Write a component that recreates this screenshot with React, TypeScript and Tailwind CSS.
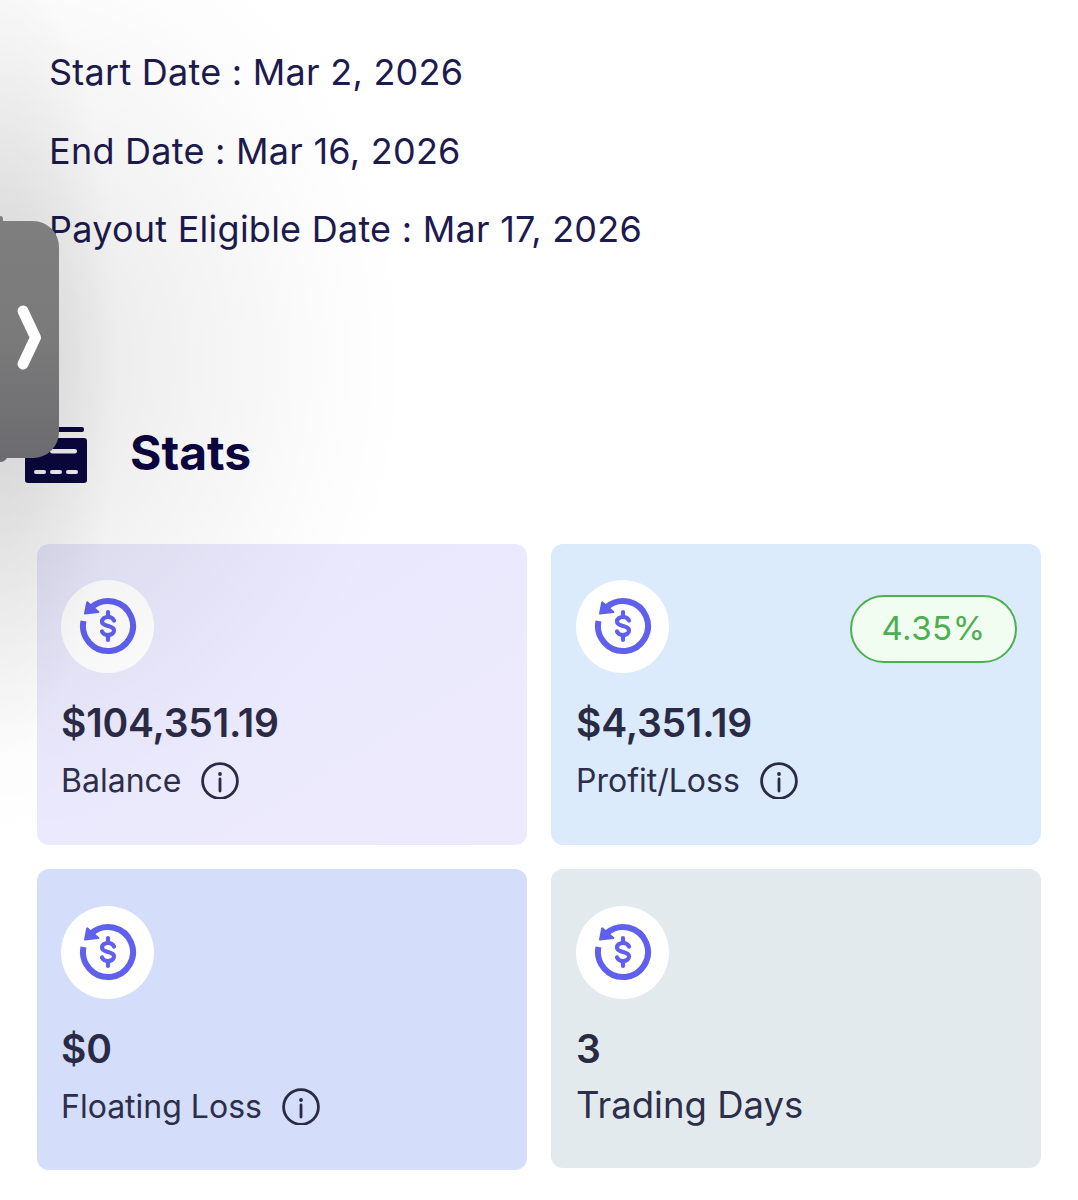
function DollarIcon() {
  return (
    <svg width="60" height="60" viewBox="0 0 60 60" fill="none">
      <path d="M14 10.8A25 25 0 1 1 5.5 25" stroke="#6060ee" strokeWidth="6" />
      <path d="M9.2 6.3 7 17.6 20.4 16Z" fill="#6060ee" stroke="#6060ee" strokeWidth="2" strokeLinejoin="round" />
      <g transform="translate(30 30)" stroke="#6060ee" strokeWidth="4.2" strokeLinecap="round">
        <path d="M6 -5.5C5 -8 2.5 -9 0 -9C-3.5 -9 -6 -7.2 -6 -4.5C-6 -1.5 -3 -0.8 0 0C3 0.8 6 1.5 6 4.5C6 7.2 3.5 9 0 9C-2.5 9 -5 8 -6 5.5" />
        <path d="M0 -14V-10M0 10V14" />
      </g>
    </svg>
  );
}

function Info() {
  return (
    <svg width="38" height="37" viewBox="0 0 38 37" fill="none" className="shrink-0">
      <circle cx="19" cy="19" r="17.4" stroke="#2a2a45" strokeWidth="2.8" />
      <circle cx="19" cy="12" r="1.9" fill="#2a2a45" />
      <path d="M19 17V29" stroke="#2a2a45" strokeWidth="2.8" strokeLinecap="round" />
    </svg>
  );
}

function Card({ bg, value, label, info, badge }: { bg: string; value: string; label: string; info?: boolean; badge?: string }) {
  return (
    <div className={`rounded-[12px] pr-[24px] ${bg}`}>
      <div className="flex items-start justify-between">
        <div className="flex h-[93px] w-[93px] items-center justify-center rounded-full bg-white">
          <DollarIcon />
        </div>
        {badge && (
          <div className="mt-[15px] flex h-[68px] w-[167px] items-center justify-center rounded-full border-[2.5px] border-[#4caf50] bg-[#f1fdf1] text-[33px] tracking-[0.5px] text-[#4caf50]">
            {badge}
          </div>
        )}
      </div>
      <div className="mt-[24px] text-[39px] leading-[52px] font-semibold tracking-[-0.2px] text-[#2a2a45]">{value}</div>
      {info ? (
        <div className="mt-[10px] flex items-center gap-[20px] text-[32px] leading-[44px] text-[#2c2e4a]">
          <span>{label}</span>
          <Info />
        </div>
      ) : (
        <div className="mt-[9px] text-[36.5px] leading-[42px] text-[#2c2e4a]">{label}</div>
      )}
    </div>
  );
}

export default function App() {
  return (
    <div className="relative h-[1200px] w-[1078px] overflow-hidden bg-white font-['Inter',sans-serif]">
      <div className="flex flex-col gap-[30px] pl-[49px] pt-[48px] text-[36px] leading-[48.5px] tracking-[0.25px] text-[#1d1a4d] [font-feature-settings:'calt'_0]">
        <div>Start Date : Mar 2, 2026</div>
        <div>End Date : Mar 16, 2026</div>
        <div>Payout Eligible Date : Mar 17, 2026</div>
      </div>

      <div className="mt-[171px] flex h-[56px] items-center pl-[25px]">
        <svg width="62" height="56" viewBox="0 0 62 56" fill="none" className="mt-[4px] shrink-0">
          <rect x="32" y="0" width="27" height="5" rx="2" fill="#0b0640" />
          <path d="M3 11H59A3 3 0 0 1 62 14V53A3 3 0 0 1 59 56H3A3 3 0 0 1 0 53V14A3 3 0 0 1 3 11Z" fill="#0b0640" />
          <rect x="25" y="22" width="27" height="4.5" rx="2.2" fill="#fff" />
          <rect x="9" y="43" width="12" height="4" rx="2" fill="#fff" />
          <rect x="25" y="43" width="12" height="4" rx="2" fill="#fff" />
          <rect x="41" y="43" width="12" height="4" rx="2" fill="#fff" />
        </svg>
        <div className="ml-[43px] text-[48px] leading-[56px] font-bold text-[#0b0640]">Stats</div>
      </div>

      <div className="mt-[63px] grid grid-cols-2 items-start gap-[24px] pl-[37px] pr-[37px]">
        <Card bg="pl-[24px] pt-[36px] pb-[42px] bg-gradient-to-br from-[#e8e8fc] to-[#eeeafd]" value="$104,351.19" label="Balance" info />
        <Card bg="pl-[25px] pt-[36px] pb-[42px] bg-[#dbebfb]" value="$4,351.19" label="Profit/Loss" info badge="4.35%" />
        <Card bg="pl-[24px] pt-[37px] pb-[41px] bg-[#d4ddfa]" value="$0" label="Floating Loss" info />
        <Card bg="pl-[25px] pt-[37px] pb-[42px] bg-[#e3eaee]" value="3" label="Trading Days" />
      </div>

      <div className="pointer-events-none absolute inset-0 bg-[radial-gradient(ellipse_410px_480px_at_0px_360px,rgba(0,0,0,0.1)_0%,rgba(0,0,0,0.04)_55%,rgba(0,0,0,0.012)_82%,rgba(0,0,0,0)_100%),radial-gradient(ellipse_120px_400px_at_0px_360px,rgba(0,0,0,0.1)_0%,rgba(0,0,0,0)_100%)]" />

      <div className="absolute left-0 top-[216px] h-[10px] w-[3px] rounded-r-full bg-[#7e7e7e]" />
      <div className="absolute left-0 top-[452px] h-[10px] w-[8px] rounded-br-full bg-[#6c6c70]" />
      <div className="absolute left-0 top-[221px] flex h-[237px] w-[59px] items-center rounded-r-[26px] bg-gradient-to-b from-[#7e7e7e] via-[#7a7a7a] to-[#6c6c70]">
        <svg width="59" height="80" viewBox="0 0 59 80" fill="none" className="-mt-[2px]">
          <path d="M23 12 35.5 38.5 23 65" stroke="#fff" strokeWidth="11" strokeLinecap="round" strokeLinejoin="round" />
        </svg>
      </div>
    </div>
  );
}
